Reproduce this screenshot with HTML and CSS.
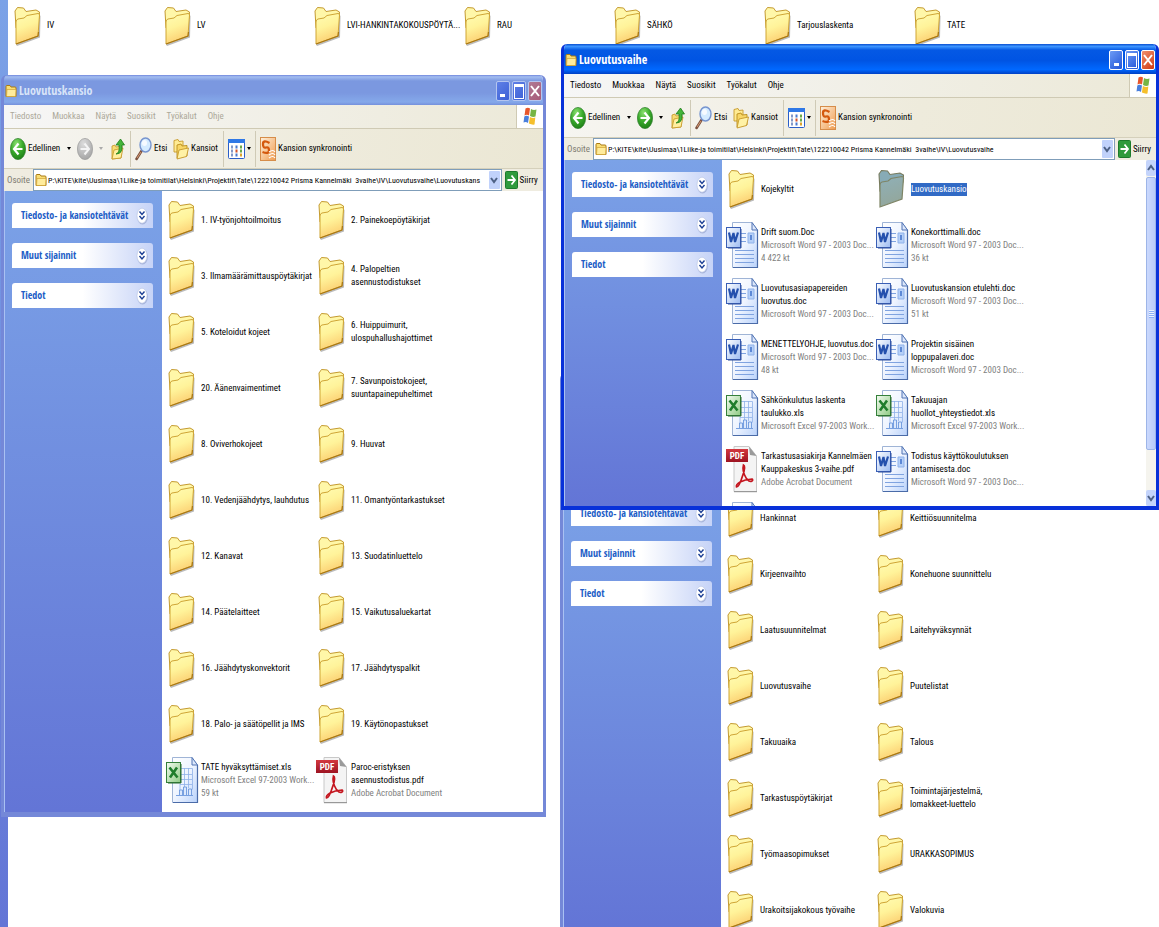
FILE: index.html
```
<!DOCTYPE html>
<html lang="fi">
<head>
<meta charset="utf-8">
<title>Luovutusvaihe</title>
<link rel="stylesheet" href="styles.css">
</head>
<body>
<svg class="defs" aria-hidden="true">
  <defs>
    <linearGradient id="gFolder" x1="0" y1="0" x2="0.3" y2="1"><stop offset="0" stop-color="#fffcb4"/><stop offset=".5" stop-color="#fff39a"/><stop offset="1" stop-color="#fccf72"/></linearGradient>
    <linearGradient id="gFolderSel" x1="0" y1="0" x2="0.3" y2="1"><stop offset="0" stop-color="#8fb0b8"/><stop offset="1" stop-color="#93a79c"/></linearGradient>
    <linearGradient id="gPage" x1="0" y1="0" x2="1" y2="1"><stop offset="0" stop-color="#fff"/><stop offset=".5" stop-color="#eef4ff"/><stop offset="1" stop-color="#b9d2fb"/></linearGradient>
    <linearGradient id="gWord" x1="0" y1="0" x2="1" y2="1"><stop offset="0" stop-color="#fff"/><stop offset="1" stop-color="#9dbcf2"/></linearGradient>
    <linearGradient id="gExcel" x1="0" y1="0" x2="1" y2="1"><stop offset="0" stop-color="#f4fbf1"/><stop offset="1" stop-color="#8fcb84"/></linearGradient>
    <linearGradient id="gPdf" x1="0" y1="0" x2="0" y2="1"><stop offset="0" stop-color="#d3383f"/><stop offset="1" stop-color="#9d1422"/></linearGradient>
    <radialGradient id="gGreen" cx=".4" cy=".25" r=".8"><stop offset="0" stop-color="#8be071"/><stop offset=".5" stop-color="#3bab2c"/><stop offset="1" stop-color="#1c7d16"/></radialGradient>
    <radialGradient id="gGrey" cx=".4" cy=".25" r=".8"><stop offset="0" stop-color="#dcdcdc"/><stop offset="1" stop-color="#a3a3a3"/></radialGradient>
    <linearGradient id="gSync" x1="0" y1="0" x2="1" y2="1"><stop offset="0" stop-color="#fff1dd"/><stop offset="1" stop-color="#ef9b4e"/></linearGradient>
  </defs>
  <symbol id="folder" viewBox="0 0 34 48">
    <path d="M4 42.500 L5 44 L28 35.500 L28.500 14 L27 12 L26 34Z" fill="#777" opacity=".5"/>
    <path d="M3 9 L5.500 5.500 L11.500 6 L14 9.500 L24 8 L27.500 10 L27 17 L4 26Z" fill="#fff7a8" stroke="#c49a30" stroke-width="1"/>
    <path d="M4 42 L4 20 Q4 17.500 6 17 L12 16 L15 13.500 L26 11.500 Q27.500 11.500 27.500 13 L26 34Z" fill="url(#gFolder)" stroke="#cfa535" stroke-width="1"/>
    <path d="M4 42 L26 34 L26.500 30" fill="none" stroke="#a87613" stroke-width="1.200"/>
  </symbol>
  <symbol id="folderSel" viewBox="0 0 34 48">
    <path d="M3 9 L5.500 5.500 L11.500 6 L14 9.500 L24 8 L27.500 10 L27 17 L4 26Z" fill="#87abb6" stroke="#777a5c" stroke-width="1.100"/>
    <path d="M4 42 L4 20 Q4 17.500 6 17 L12 16 L15 13.500 L26 11.500 Q27.500 11.500 27.500 13 L26 34Z" fill="url(#gFolderSel)" stroke="#7f8566" stroke-width="1.200"/>
  </symbol>
  <symbol id="page" viewBox="0 0 34 48">
    <path d="M6.500 1.500H26L31.500 9V46.500H6.500Z" fill="url(#gPage)" stroke="#9fb4d6"/>
    <path d="M31.500 9V46.500H7" fill="none" stroke="#4a6ba8" stroke-width="1.200"/>
    <path d="M26 1.500V9H31.500Z" fill="#dbe7fb" stroke="#5275b5"/>
  </symbol>
  <symbol id="word" viewBox="0 0 34 48">
    <use href="#page"/>
    <path d="M15 12.500h5M15 16.500h5M15 20.500h5M9 29.500h19M9 33.500h19M9 37.500h19M9 41.500h19" stroke="#7fa3e0"/>
    <path d="M22 12h6v10h-6z" fill="#b6d0f8" stroke="#8fb2ea"/><path d="M24 14h2v5h-2z" fill="#5d88d5"/>
    <rect x=".5" y="6.500" width="14" height="20" fill="url(#gWord)" stroke="#3a5fb5"/>
    <path d="M3 11.500 L5 21 L7.500 12 L9 21 L12 11.500" fill="none" stroke="#2450ad" stroke-width="2.200"/>
    <path d="M15 8v19H2" fill="none" stroke="#2c4f9e"/>
  </symbol>
  <symbol id="excel" viewBox="0 0 34 48">
    <use href="#page"/>
    <path d="M15 12.500h11.500v21M15 18.500h11M15 23.500h11M14 28.500h12M14 28v6M18.500 12v20M22.500 12v20" fill="none" stroke="#8fb1e8" stroke-width=".8"/>
    <path d="M10 39.500h17M13.500 39v-5h3v5M17.500 39v-8h3v8M22.500 39v-6h3v6" fill="#dbe8fc" stroke="#6c97dd" stroke-width=".9"/>
    <rect x=".5" y="6.500" width="14" height="20" fill="url(#gExcel)" stroke="#35803a"/>
    <path d="M3.500 11.500 L11.500 21.500 M11 11.500 L4 21.500" stroke="#1f7d2b" stroke-width="2.600"/>
    <path d="M15 8v19H2" fill="none" stroke="#2a6b30"/>
  </symbol>
  <symbol id="pdf" viewBox="0 0 34 48">
    <path d="M8 1.500H23L30.500 11V46.500H8Z" fill="#f4f4f4" stroke="#c8c8c8"/>
    <path d="M8 46.700H31" stroke="#8d8d8d"/>
    <path d="M23 1.500 L30.500 11 L24 10Z" fill="#9a9a9a"/>
    <rect x="0" y="4" width="22" height="13" fill="url(#gPdf)"/>
    <path d="M17.500 20 C20 21 18 27 16.500 31 C15 36 12.500 42 10.500 42 C9.500 39 16 34.500 26 34 C28 35.500 25 37 23 36 C18.500 33 17 26 17 23 Z" fill="none" stroke="#c4161f" stroke-width="1.700"/>
  </symbol>
  <symbol id="miniFolder" viewBox="0 0 12 14">
    <path d="M1 12.500V2.500Q1 1.500 2 1.500H5L6 3H10Q11 3 11 4V12.500Z" fill="#f9dd74" stroke="#a97b15"/>
    <path d="M1.500 12.500L2 5.500H11L10.500 12.500Z" fill="#ffec9c" stroke="#d0a436" stroke-width=".7"/>
  </symbol>
  <symbol id="back" viewBox="0 0 16 22"><ellipse cx="8" cy="11" rx="7.600" ry="10.600" fill="url(#gGreen)" stroke="#2b7d28" stroke-width=".7"/><path d="M8.500 5.500L4 11L8.500 16.500M4 11H12.500" fill="none" stroke="#fff" stroke-width="2.200"/></symbol>
  <symbol id="fwd" viewBox="0 0 16 22"><ellipse cx="8" cy="11" rx="7.600" ry="10.600" fill="url(#gGreen)" stroke="#2b7d28" stroke-width=".7"/><path d="M7.500 5.500L12 11L7.500 16.500M12 11H3.500" fill="none" stroke="#fff" stroke-width="2.200"/></symbol>
  <symbol id="fwdOff" viewBox="0 0 16 22"><ellipse cx="8" cy="11" rx="7.600" ry="10.600" fill="url(#gGrey)" stroke="#999" stroke-width=".7"/><path d="M7.500 5.500L12 11L7.500 16.500M12 11H3.500" fill="none" stroke="#f4f4f4" stroke-width="2"/></symbol>
  <symbol id="up" viewBox="0 0 14 22">
    <path d="M1 8L4 7L5 9L11 8L10 20L1 21Z" fill="#f7dc73" stroke="#c39424" stroke-width=".8"/>
    <path d="M1 21L3 12L12 10L10 20Z" fill="#ffefa0" stroke="#c39424" stroke-width=".8"/>
    <path d="M5 16Q9 15 8 7H5L9.500 1L13.500 7H11Q12 16 5 16Z" fill="#45b53a" stroke="#1d7c19" stroke-width=".8"/>
  </symbol>
  <symbol id="search" viewBox="0 0 17 24"><path d="M6.500 14L1.500 22" stroke="#7c5340" stroke-width="2.600" stroke-linecap="round"/><path d="M6 15L2 21" stroke="#d79b74" stroke-width="1"/><ellipse cx="10.500" cy="8" rx="5.500" ry="7" fill="#d5ecff" stroke="#7795cf" stroke-width="1.400"/><ellipse cx="9.500" cy="6" rx="2.500" ry="3" fill="#fff" opacity=".8"/></symbol>
  <symbol id="folders" viewBox="0 0 16 22">
    <path d="M1 14V2.500L5 1.500L6 3.500L10 3V14Z" fill="#ffeb93" stroke="#c6982a" stroke-width=".9"/>
    <path d="M4 20V7L8 6L9 8L14 7.500V18Z" fill="#f8d767" stroke="#b98c1c" stroke-width=".9"/>
    <path d="M4 21L6 12L15.500 10L13.500 18.500Z" fill="#fff2a6" stroke="#c6982a" stroke-width=".9"/>
  </symbol>
  <symbol id="views" viewBox="0 0 17 20"><rect x=".5" y=".5" width="16" height="19" rx="1" fill="#fff" stroke="#2b5fc9"/><rect x="0" y="0" width="17" height="4" fill="#2f78e6"/><path d="M3 8h2M3 12h2M3 16h2" stroke="#8298c8" stroke-width="3"/><path d="M7.500 8h2M7.500 16h2" stroke="#4b79cc" stroke-width="3"/><path d="M7.500 12h2" stroke="#d0532c" stroke-width="3"/><path d="M12 8h2M12 12h2" stroke="#6aa84a" stroke-width="3"/><path d="M12 16h2" stroke="#dca32e" stroke-width="3"/></symbol>
  <symbol id="sync" viewBox="0 0 16 24"><rect x=".5" y=".5" width="15" height="23" fill="url(#gSync)" stroke="#d68d4a"/><path d="M9.500 6Q3 2.500 3 7T6 10.500T9 13.500T2.500 15" fill="none" stroke="#d4590e" stroke-width="2.300"/><path d="M9 15Q13 12 15 15M9 18Q13 15 15 18M9 21Q13 18 15 21" fill="none" stroke="#fff" stroke-width="1.200"/></symbol>
  <symbol id="go" viewBox="0 0 13 18"><rect x=".5" y=".5" width="12" height="17" rx="1" fill="#2f9a3c" stroke="#1c7a2b"/><path d="M6.500 4.500L10 9L6.500 13.500M10 9H2.500" fill="none" stroke="#fff" stroke-width="1.800"/></symbol>
  <symbol id="flag" viewBox="0 0 14 18">
    <path d="M2.500 1.500Q5 0 7 1.500L6 8.500Q4 7 1.500 8.500Z" fill="#e8562b"/><path d="M8 2Q10.500 3.500 13.500 2.500L12.500 9.500Q10 10.500 7 9Z" fill="#76b544"/>
    <path d="M1.300 9.500Q3.500 8 6 9.500L5 16Q3 14.500 .5 15.500Z" fill="#4a7fdc"/><path d="M6.900 10Q10 11.500 12.300 10.500L11.500 17.500Q9 18 5.900 16.500Z" fill="#f5bf2c"/>
  </symbol>
  <symbol id="chev" viewBox="0 0 12 18"><ellipse cx="6.500" cy="9.800" rx="5.300" ry="7.700" fill="#8e9cc8" opacity=".6"/><ellipse cx="6" cy="8.700" rx="5" ry="7.500" fill="#fff" stroke="#b9c4e4" stroke-width=".6"/><path d="M3.500 4.500L6 7.500L8.500 4.500M3.500 9L6 12L8.500 9" fill="none" stroke="#1c3f94" stroke-width="1.400"/></symbol>
  <symbol id="down" viewBox="0 0 8 8"><path d="M1 2L4 6L7 2" fill="none" stroke="#4d6185" stroke-width="2"/></symbol>
  <symbol id="upArrow" viewBox="0 0 8 8"><path d="M1 6L4 2L7 6" fill="none" stroke="#4d6185" stroke-width="2"/></symbol>
</svg>

<main class="desktop">
  <section class="backdrop" aria-label="Projekti">
    <div class="rail"></div>
    <ul class="files">
      <li><svg><use href="#folder"/></svg><span>IV</span></li>
      <li><svg><use href="#folder"/></svg><span>LV</span></li>
      <li><svg><use href="#folder"/></svg><span>LVI-HANKINTAKOKOUSPÖYTÄ...</span></li>
      <li><svg><use href="#folder"/></svg><span>RAU</span></li>
      <li><svg><use href="#folder"/></svg><span>SÄHKÖ</span></li>
      <li><svg><use href="#folder"/></svg><span>Tarjouslaskenta</span></li>
      <li><svg><use href="#folder"/></svg><span>TATE</span></li>
    </ul>
  </section>

  <section class="window inactive parent" aria-label="IV">
    <div class="covered"></div>
    <div class="client">
      <aside class="tasks">
        <button>Tiedosto- ja kansiotehtävät<svg><use href="#chev"/></svg></button>
        <button>Muut sijainnit<svg><use href="#chev"/></svg></button>
        <button>Tiedot<svg><use href="#chev"/></svg></button>
      </aside>
      <ul class="files">
        <li><svg><use href="#folder"/></svg><span>Hankinnat</span></li>
        <li><svg><use href="#folder"/></svg><span>Keittiösuunnitelma</span></li>
        <li><svg><use href="#folder"/></svg><span>Kirjeenvaihto</span></li>
        <li><svg><use href="#folder"/></svg><span>Konehuone suunnittelu</span></li>
        <li><svg><use href="#folder"/></svg><span>Laatusuunnitelmat</span></li>
        <li><svg><use href="#folder"/></svg><span>Laitehyväksynnät</span></li>
        <li><svg><use href="#folder"/></svg><span>Luovutusvaihe</span></li>
        <li><svg><use href="#folder"/></svg><span>Puutelistat</span></li>
        <li><svg><use href="#folder"/></svg><span>Takuuaika</span></li>
        <li><svg><use href="#folder"/></svg><span>Talous</span></li>
        <li><svg><use href="#folder"/></svg><span>Tarkastuspöytäkirjat</span></li>
        <li><svg><use href="#folder"/></svg><span>Toimintajärjestelmä,<br>lomakkeet-luettelo</span></li>
        <li><svg><use href="#folder"/></svg><span>Työmaasopimukset</span></li>
        <li><svg><use href="#folder"/></svg><span>URAKKASOPIMUS</span></li>
        <li><svg><use href="#folder"/></svg><span>Urakoitsijakokous työvaihe</span></li>
        <li><svg><use href="#folder"/></svg><span>Valokuvia</span></li>
      </ul>
    </div>
  </section>

  <section class="window inactive folder-window" aria-label="Luovutuskansio">
    <header class="title">
      <svg><use href="#miniFolder"/></svg><h1>Luovutuskansio</h1>
      <button class="cap min" aria-label="Pienennä"></button><button class="cap max" aria-label="Suurenna"></button><button class="cap close" aria-label="Sulje"><svg viewBox="0 0 12 16"><path d="M2 3L10 13M10 3L2 13"/></svg></button>
    </header>
    <nav class="menu">
      <button>Tiedosto</button><button>Muokkaa</button><button>Näytä</button><button>Suosikit</button><button>Työkalut</button><button>Ohje</button>
      <span class="logo"><svg><use href="#flag"/></svg></span>
    </nav>
    <div class="toolbar">
      <button class="nav"><svg class="round"><use href="#back"/></svg>Edellinen<i></i></button>
      <button class="next" aria-label="Seuraava" disabled><svg class="round"><use href="#fwdOff"/></svg><i></i></button>
      <button class="upb" aria-label="Ylös"><svg class="upi"><use href="#up"/></svg></button>
      <hr>
      <button class="find"><svg class="lens"><use href="#search"/></svg>Etsi</button>
      <button class="dirs"><svg class="round"><use href="#folders"/></svg>Kansiot</button>
      <hr>
      <button class="view" aria-label="Näkymät"><svg class="grid"><use href="#views"/></svg><i></i></button>
      <hr>
      <button class="sync"><svg class="syn"><use href="#sync"/></svg>Kansion synkronointi</button>
    </div>
    <form class="address">
      <label for="addr1">Osoite</label>
      <div class="field"><svg><use href="#miniFolder"/></svg><input id="addr1" value="P:\KITE\kite\Uusimaa\1Liike-ja toimitilat\Helsinki\Projektit\Tate\122210042 Prisma Kannelmäki  3vaihe\IV\Luovutusvaihe\Luovutuskans"><button type="button" aria-label="Avaa luettelo"><svg><use href="#down"/></svg></button></div>
      <button type="button" class="go"><svg><use href="#go"/></svg>Siirry</button>
    </form>
    <div class="client">
      <aside class="tasks">
        <button>Tiedosto- ja kansiotehtävät<svg><use href="#chev"/></svg></button>
        <button>Muut sijainnit<svg><use href="#chev"/></svg></button>
        <button>Tiedot<svg><use href="#chev"/></svg></button>
      </aside>
      <ul class="files">
        <li><svg><use href="#folder"/></svg><span>1. IV-työnjohtoilmoitus</span></li>
        <li><svg><use href="#folder"/></svg><span>2. Painekoepöytäkirjat</span></li>
        <li><svg><use href="#folder"/></svg><span>3. Ilmamäärämittauspöytäkirjat</span></li>
        <li><svg><use href="#folder"/></svg><span>4. Palopeltien<br>asennustodistukset</span></li>
        <li><svg><use href="#folder"/></svg><span>5. Koteloidut kojeet</span></li>
        <li><svg><use href="#folder"/></svg><span>6. Huippuimurit,<br>ulospuhallushajottimet</span></li>
        <li><svg><use href="#folder"/></svg><span>20. Äänenvaimentimet</span></li>
        <li><svg><use href="#folder"/></svg><span>7. Savunpoistokojeet,<br>suuntapainepuheltimet</span></li>
        <li><svg><use href="#folder"/></svg><span>8. Oviverhokojeet</span></li>
        <li><svg><use href="#folder"/></svg><span>9. Huuvat</span></li>
        <li><svg><use href="#folder"/></svg><span>10. Vedenjäähdytys, lauhdutus</span></li>
        <li><svg><use href="#folder"/></svg><span>11. Omantyöntarkastukset</span></li>
        <li><svg><use href="#folder"/></svg><span>12. Kanavat</span></li>
        <li><svg><use href="#folder"/></svg><span>13. Suodatinluettelo</span></li>
        <li><svg><use href="#folder"/></svg><span>14. Päätelaitteet</span></li>
        <li><svg><use href="#folder"/></svg><span>15. Vaikutusaluekartat</span></li>
        <li><svg><use href="#folder"/></svg><span>16. Jäähdytyskonvektorit</span></li>
        <li><svg><use href="#folder"/></svg><span>17. Jäähdytyspalkit</span></li>
        <li><svg><use href="#folder"/></svg><span>18. Palo- ja säätöpellit ja IMS</span></li>
        <li><svg><use href="#folder"/></svg><span>19. Käytönopastukset</span></li>
        <li><svg><use href="#excel"/></svg><span>TATE hyväksyttämiset.xls<small>Microsoft Excel 97-2003 Work...</small><small>59 kt</small></span></li>
        <li><svg viewBox="0 0 34 48"><use href="#pdf"/><text x="11" y="14" text-anchor="middle" class="pdf-text">PDF</text></svg><span>Paroc-eristyksen<br>asennustodistus.pdf<small>Adobe Acrobat Document</small></span></li>
      </ul>
    </div>
  </section>

  <section class="window active phase-window" aria-label="Luovutusvaihe">
    <header class="title">
      <svg><use href="#miniFolder"/></svg><h1>Luovutusvaihe</h1>
      <button class="cap min" aria-label="Pienennä"></button><button class="cap max" aria-label="Suurenna"></button><button class="cap close" aria-label="Sulje"><svg viewBox="0 0 12 16"><path d="M2 3L10 13M10 3L2 13"/></svg></button>
    </header>
    <nav class="menu">
      <button>Tiedosto</button><button>Muokkaa</button><button>Näytä</button><button>Suosikit</button><button>Työkalut</button><button>Ohje</button>
      <span class="logo"><svg><use href="#flag"/></svg></span>
    </nav>
    <div class="toolbar">
      <button class="nav"><svg class="round"><use href="#back"/></svg>Edellinen<i></i></button>
      <button class="next" aria-label="Seuraava"><svg class="round"><use href="#fwd"/></svg><i></i></button>
      <button class="upb" aria-label="Ylös"><svg class="upi"><use href="#up"/></svg></button>
      <hr>
      <button class="find"><svg class="lens"><use href="#search"/></svg>Etsi</button>
      <button class="dirs"><svg class="round"><use href="#folders"/></svg>Kansiot</button>
      <hr>
      <button class="view" aria-label="Näkymät"><svg class="grid"><use href="#views"/></svg><i></i></button>
      <hr>
      <button class="sync"><svg class="syn"><use href="#sync"/></svg>Kansion synkronointi</button>
    </div>
    <form class="address">
      <label for="addr2">Osoite</label>
      <div class="field"><svg><use href="#miniFolder"/></svg><input id="addr2" value="P:\KITE\kite\Uusimaa\1Liike-ja toimitilat\Helsinki\Projektit\Tate\122210042 Prisma Kannelmäki  3vaihe\IV\Luovutusvaihe"><button type="button" aria-label="Avaa luettelo"><svg><use href="#down"/></svg></button></div>
      <button type="button" class="go"><svg><use href="#go"/></svg>Siirry</button>
    </form>
    <div class="client">
      <aside class="tasks">
        <button>Tiedosto- ja kansiotehtävät<svg><use href="#chev"/></svg></button>
        <button>Muut sijainnit<svg><use href="#chev"/></svg></button>
        <button>Tiedot<svg><use href="#chev"/></svg></button>
      </aside>
      <ul class="files">
        <li><svg><use href="#folder"/></svg><span>Kojekyltit</span></li>
        <li><svg><use href="#folderSel"/></svg><span class="selected">Luovutuskansio</span></li>
        <li><svg><use href="#word"/></svg><span>Drift suom.Doc<small>Microsoft Word 97 - 2003 Doc...</small><small>4 422 kt</small></span></li>
        <li><svg><use href="#word"/></svg><span>Konekorttimalli.doc<small>Microsoft Word 97 - 2003 Doc...</small><small>36 kt</small></span></li>
        <li><svg><use href="#word"/></svg><span>Luovutusasiapapereiden<br>luovutus.doc<small>Microsoft Word 97 - 2003 Doc...</small></span></li>
        <li><svg><use href="#word"/></svg><span>Luovutuskansion etulehti.doc<small>Microsoft Word 97 - 2003 Doc...</small><small>51 kt</small></span></li>
        <li><svg><use href="#word"/></svg><span>MENETTELYOHJE, luovutus.doc<small>Microsoft Word 97 - 2003 Doc...</small><small>48 kt</small></span></li>
        <li><svg><use href="#word"/></svg><span>Projektin sisäinen<br>loppupalaveri.doc<small>Microsoft Word 97 - 2003 Doc...</small></span></li>
        <li><svg><use href="#excel"/></svg><span>Sähkönkulutus laskenta<br>taulukko.xls<small>Microsoft Excel 97-2003 Work...</small></span></li>
        <li><svg><use href="#excel"/></svg><span>Takuuajan<br>huollot_yhteystiedot.xls<small>Microsoft Excel 97-2003 Work...</small></span></li>
        <li><svg viewBox="0 0 34 48"><use href="#pdf"/><text x="11" y="14" text-anchor="middle" class="pdf-text">PDF</text></svg><span>Tarkastusasiakirja Kannelmäen<br>Kauppakeskus 3-vaihe.pdf<small>Adobe Acrobat Document</small></span></li>
        <li><svg><use href="#word"/></svg><span>Todistus käyttökoulutuksen<br>antamisesta.doc<small>Microsoft Word 97 - 2003 Doc...</small></span></li>
        <li><svg><use href="#word"/></svg></li>
      </ul>
      <div class="scroll"><button aria-label="Vieritä ylös"><svg><use href="#upArrow"/></svg></button><div class="thumb"></div><button aria-label="Vieritä alas"><svg><use href="#down"/></svg></button></div>
    </div>
  </section>
</main>
</body>
</html>
```
FILE: styles.css
```
* { box-sizing: border-box; }
body { margin: 0; font: 9px/13px "Roboto Condensed", Roboto, sans-serif; color: #000; background: #fff; }
button { font: inherit; color: inherit; border: 0; padding: 0; background: none; display: flex; align-items: center; white-space: nowrap; }
svg { flex: none; display: block; }
.defs { position: absolute; width: 0; height: 0; }
.pdf-text { font: bold 9px "Roboto Condensed", Roboto, sans-serif; fill: #fff; }

.desktop { position: relative; height: 100vh; overflow: hidden; }

.backdrop { height: 100%; display: flex; }
.rail { width: 8px; flex: none; background: linear-gradient(#7ba2e7, #6375d6); }

.files { flex: 1; margin: 0; padding: 1px 0 0 4px; list-style: none; display: grid; grid-template-columns: repeat(auto-fill, 150px); grid-auto-rows: 56px; align-content: start; background: #fff; overflow: hidden; }
.files li { display: flex; align-items: center; gap: 1px; white-space: nowrap; }
.files svg { width: 34px; height: 48px; }
.files small { display: block; font-size: inherit; color: #808080; }
.files .selected { background: #316ac5; color: #fff; }
.backdrop .files { padding: 0 0 0 4px; grid-auto-rows: 51px; }

.window { position: absolute; display: flex; flex-direction: column; border: solid; border-width: 0 3px 5px; border-radius: 6px 6px 0 0; overflow: hidden; }
.inactive { border-color: #7488d8; }
.active { border-color: #0831d9; }
.folder-window { left: 1px; top: 75px; width: 47%; bottom: 110px; }
.phase-window { left: 561px; right: 0; top: 44px; bottom: 417px; border-bottom-width: 4px; }
.parent { left: 560px; right: -4px; top: 373px; bottom: -5px; }
.covered { height: 116px; flex: none; background: #7b99e1; }

.title { height: 30px; flex: none; display: flex; align-items: center; gap: 2px; margin: 0 -3px; padding: 3px 4px 1px; color: #fff; }
.inactive .title { background: linear-gradient(#6f86dc, #a3bdf0 6%, #7b98e0 20%, #7b98e0 60%, #85a9ea 90%, #7590dc); color: #d8e4f8; }
.active .title { background: linear-gradient(#0a4fd0, #3d95ff 8%, #0559e4 20%, #0054e3 55%, #0068ff 85%, #0040c4); }
.title > svg { width: 12px; height: 14px; }
.title h1 { margin: 0; flex: 1; font: bold 12px/18px "Open Sans Condensed", "Roboto Condensed", sans-serif; }
.cap { width: 14px; height: 20px; border: 1px solid #fff; border-radius: 2px; background: linear-gradient(135deg, #6d9bf5, #2355d8); justify-content: center; }
.inactive .cap { border-color: #b4c5f0; background: linear-gradient(135deg, #5f80e6, #3c60d6); }
.min::before { content: ""; width: 5px; height: 3px; margin-top: 8px; background: #fff; }
.max::before { content: ""; width: 8px; height: 11px; border: 1px solid #fff; border-top-width: 3px; }
.active .close { background: linear-gradient(135deg, #f0906f, #d03a12); }
.inactive .close { background: linear-gradient(135deg, #b07a94, #a85a78); }
.close svg { width: 12px; height: 16px; fill: none; stroke: #fff; stroke-width: 2; }

.menu { height: 24px; flex: none; display: flex; align-items: center; gap: 11px; padding-left: 6px; background: linear-gradient(90deg, #f6f6f6, #ece9d8); border-bottom: 1px solid #cfcab4; }
.inactive .menu { color: #aca899; }
.logo { margin-left: auto; align-self: stretch; width: 27px; padding: 2px 0 0 6px; background: #fff; border-left: 1px solid #cfcab4; }
.logo svg { width: 14px; height: 18px; }

.toolbar { height: 40px; flex: none; display: flex; align-items: center; padding-left: 6px; background: linear-gradient(100deg, #f6f5f1, #eeebdc 60%, #ebe7d4); border-bottom: 1px solid #d5d0bb; }
.toolbar button { gap: 2px; }
.toolbar hr { width: 1px; height: 36px; margin: 0; border: 0; background: #cfcab6; }
.toolbar i { border: solid transparent; border-width: 3px 2px 0; border-top-color: #000; }
.toolbar :disabled i { border-top-color: #aaa; }
.round { width: 16px; height: 22px; }
.upi { width: 14px; height: 22px; }
.lens { width: 17px; height: 24px; }
.grid { width: 17px; height: 20px; }
.syn { width: 16px; height: 24px; }
.nav { width: 67px; }
.nav i { margin-left: 5px; }
.next { width: 34px; }
.next i { margin-left: 4px; }
.upb { width: 19px; }
.find { width: 42px; padding-left: 4px; }
.dirs { width: 50px; }
.view { width: 31px; padding-left: 4px; }
.sync { padding-left: 4px; }

.address { height: 22px; flex: none; display: flex; align-items: center; gap: 3px; padding: 0 5px 0 3px; background: #efece0; }
.address label { color: #7f7c73; }
.field { flex: 1; height: 22px; display: flex; align-items: center; padding: 0 1px 0 1px; border: 1px solid #7f9db9; background: #fff; }
.field > svg { width: 12px; height: 14px; }
.field input { flex: 1; min-width: 0; height: 18px; border: 0; padding: 0 0 0 1px; font: inherit; font-size: 8px; background: none; outline: 0; }
.field button { width: 11px; height: 18px; justify-content: center; background: #c1d2fb; border-radius: 1px; }
.field button svg, .scroll svg { width: 8px; height: 8px; }
.go { gap: 2px; }
.go svg { width: 13px; height: 18px; }

.client { flex: 1; min-height: 0; display: flex; }
.tasks { width: 158px; flex: none; padding: 12px 9px 0 7px; display: flex; flex-direction: column; gap: 15px; background: linear-gradient(#7ba2e7, #6375d6); border-left: 1px solid #a9c1f2; }
.tasks button { height: 25px; padding: 0 5px 0 9px; justify-content: space-between; border-radius: 3px 3px 0 0; background: linear-gradient(90deg, #fff 50%, #c6d3f7); color: #215dc6; font: bold 10px/13px "Open Sans Condensed", "Roboto Condensed", sans-serif; }
.tasks svg { width: 12px; height: 18px; }

.scroll { width: 10px; flex: none; display: flex; flex-direction: column; background: #f5f4ee; }
.scroll button { height: 16px; flex: none; justify-content: center; background: #c4d4fb; border-radius: 2px; }
.thumb { height: 79%; margin: 1px 0 auto; border: 1px solid #9db5e8; border-radius: 2px; background: linear-gradient(90deg, #cbd9fd, #b8cbfa); display: flex; align-items: center; justify-content: center; }
.thumb::before { content: ""; width: 5px; height: 8px; background: repeating-linear-gradient(#eef4fe 0 1px, #8cb0f8 1px 2px); }
```
